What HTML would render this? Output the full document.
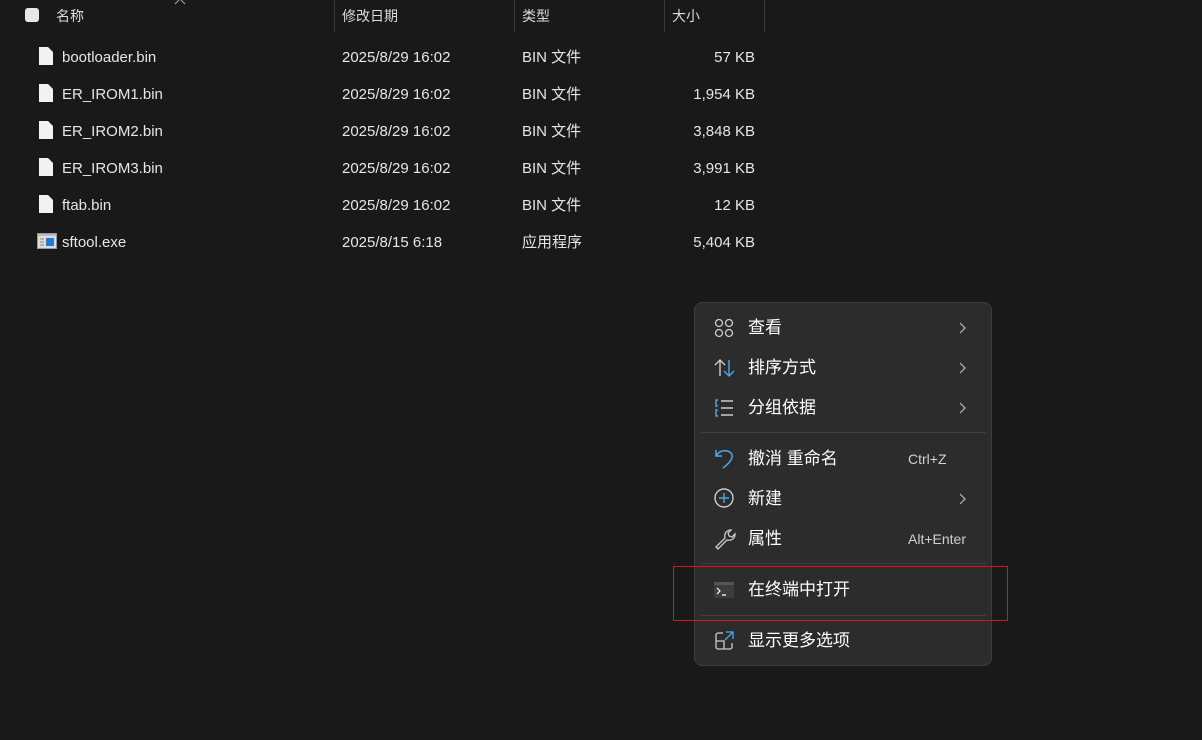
<!DOCTYPE html><html><head><meta charset="utf-8"><style>
body{margin:0;width:1202px;height:740px;background:#191919;font-family:"Liberation Sans","Noto Sans CJK SC",sans-serif;color:#fff;position:relative;overflow:hidden}
.a{position:absolute;white-space:nowrap}
.h{font-size:14px;color:#dcdcdc;top:6px;line-height:20px}
.d{position:absolute;top:0;width:1px;height:32px;background:#3a3a3a}
.r{font-size:15px;color:#e6e6e6;line-height:20px;top:2px}
.f{position:absolute;left:39px;top:1px;width:14px;height:18px}
.menu{position:absolute;left:694px;top:302px;width:296px;height:362px;background:#2c2c2c;border:1px solid #3c3c3c;border-radius:8px}
.m{position:absolute;left:53px;font-size:17px;color:#fff;line-height:24px;margin-top:1px}
.k{position:absolute;left:213px;font-size:14px;color:#d0d0d0;line-height:20px}
.c{position:absolute;left:264px}
.s{position:absolute;left:6px;width:285px;height:1px;background:#3f3f3f}
.i{position:absolute;left:19px}
</style></head><body>
<div class="a" style="left:25px;top:8px;width:14px;height:14px;border-radius:3px;background:#e8e8e8"></div>
<div class="a h" style="left:56px">名称</div>
<svg class="a" style="left:174px;top:-2px" width="12" height="8"><path d="M1 6L6 1L11 6" stroke="#aaa" fill="none"/></svg>
<div class="d" style="left:334px"></div><div class="a h" style="left:342px">修改日期</div>
<div class="d" style="left:514px"></div><div class="a h" style="left:522px">类型</div>
<div class="d" style="left:664px"></div><div class="a h" style="left:672px">大小</div>
<div class="d" style="left:764px"></div>

<div style="position:absolute;left:0;top:46px">
<div style="position:absolute;top:0"><svg class="f"><path d="M0 0H9L14 5V18H0Z" fill="#f2f2f2"/></svg><span class="a r" style="left:62px">bootloader.bin</span><span class="a r" style="left:342px">2025/8/29 16:02</span><span class="a r" style="left:522px">BIN 文件</span><span class="a r" style="left:655px;width:100px;text-align:right">57 KB</span></div>
<div style="position:absolute;top:37px"><svg class="f"><path d="M0 0H9L14 5V18H0Z" fill="#f2f2f2"/></svg><span class="a r" style="left:62px">ER_IROM1.bin</span><span class="a r" style="left:342px">2025/8/29 16:02</span><span class="a r" style="left:522px">BIN 文件</span><span class="a r" style="left:655px;width:100px;text-align:right">1,954 KB</span></div>
<div style="position:absolute;top:74px"><svg class="f"><path d="M0 0H9L14 5V18H0Z" fill="#f2f2f2"/></svg><span class="a r" style="left:62px">ER_IROM2.bin</span><span class="a r" style="left:342px">2025/8/29 16:02</span><span class="a r" style="left:522px">BIN 文件</span><span class="a r" style="left:655px;width:100px;text-align:right">3,848 KB</span></div>
<div style="position:absolute;top:111px"><svg class="f"><path d="M0 0H9L14 5V18H0Z" fill="#f2f2f2"/></svg><span class="a r" style="left:62px">ER_IROM3.bin</span><span class="a r" style="left:342px">2025/8/29 16:02</span><span class="a r" style="left:522px">BIN 文件</span><span class="a r" style="left:655px;width:100px;text-align:right">3,991 KB</span></div>
<div style="position:absolute;top:148px"><svg class="f"><path d="M0 0H9L14 5V18H0Z" fill="#f2f2f2"/></svg><span class="a r" style="left:62px">ftab.bin</span><span class="a r" style="left:342px">2025/8/29 16:02</span><span class="a r" style="left:522px">BIN 文件</span><span class="a r" style="left:655px;width:100px;text-align:right">12 KB</span></div>
<div style="position:absolute;top:185px"><svg class="a" style="left:37px;top:2px" width="20" height="16"><rect x="0.5" y="0.5" width="19" height="15" fill="#ddd" stroke="#999"/><rect x="1" y="1" width="18" height="2" fill="#bbb"/><rect x="9" y="5" width="8" height="8" fill="#1e7ad8"/><path d="M3 6h4M3 9h4M3 12h4" stroke="#888"/></svg><span class="a r" style="left:62px">sftool.exe</span><span class="a r" style="left:342px">2025/8/15 6:18</span><span class="a r" style="left:522px">应用程序</span><span class="a r" style="left:655px;width:100px;text-align:right">5,404 KB</span></div>
</div>

<div class="menu">
<svg class="i" style="top:15px" width="20" height="20" fill="none" stroke="#ccc" stroke-width="1.3"><circle cx="5" cy="5" r="3.5"/><circle cx="15" cy="5" r="3.5"/><circle cx="5" cy="15" r="3.5"/><circle cx="15" cy="15" r="3.5"/></svg>
<div class="m" style="top:12px">查看</div><svg class="c" style="top:19px" width="8" height="12"><path d="M1 1L6 6L1 11" stroke="#bbb" fill="none" stroke-width="1.2"/></svg>
<svg class="i" style="top:55px" width="22" height="20" fill="none" stroke-width="1.4"><path d="M6 18V2M1 7L6 2L11 7" stroke="#ccc"/><path d="M15 2V18M10 13L15 18L20 13" stroke="#4aa8e8"/></svg>
<div class="m" style="top:52px">排序方式</div><svg class="c" style="top:59px" width="8" height="12"><path d="M1 1L6 6L1 11" stroke="#bbb" fill="none" stroke-width="1.2"/></svg>
<svg class="i" style="top:95px" width="20" height="20" fill="none" stroke-width="1.4"><path d="M7 3h12M7 10h12M7 17h12" stroke="#ccc"/><path d="M4 2H2V8H4M4 12H2V18H4" stroke="#4aa8e8"/></svg>
<div class="m" style="top:92px">分组依据</div><svg class="c" style="top:99px" width="8" height="12"><path d="M1 1L6 6L1 11" stroke="#bbb" fill="none" stroke-width="1.2"/></svg>
<div class="s" style="top:129px"></div>
<svg class="i" style="top:145px" width="22" height="22" fill="none" stroke="#4aa8e8" stroke-width="1.5"><path d="M2 2V8H8M2 8C5 3 11 1 16 4C21 8 17 14 9 20"/></svg>
<div class="m" style="top:143px">撤消 重命名</div><div class="k" style="top:146px">Ctrl+Z</div>
<svg class="i" style="top:185px" width="22" height="22" fill="none" stroke-width="1.4"><circle cx="10" cy="10" r="9" stroke="#ccc"/><path d="M10 5V15M5 10H15" stroke="#4aa8e8"/></svg>
<div class="m" style="top:183px">新建</div><svg class="c" style="top:190px" width="8" height="12"><path d="M1 1L6 6L1 11" stroke="#bbb" fill="none" stroke-width="1.2"/></svg>
<svg class="i" style="top:225px" width="22" height="22" fill="none" stroke="#ccc" stroke-width="1.3"><path d="M2 19L11 10C10 6 12 2 17 2L14 5L15 8L18 9L21 6C21 11 17 13 13 12L4 21Z"/></svg>
<div class="m" style="top:223px">属性</div><div class="k" style="top:226px">Alt+Enter</div>
<div class="s" style="top:260px"></div>
<svg class="i" style="top:279px" width="20" height="16"><rect width="20" height="16" fill="#3d3d3d"/><rect width="20" height="3" fill="#555"/><path d="M3 6L6 9L3 12M8 13H12" stroke="#fff" stroke-width="1.2" fill="none"/></svg>
<div class="m" style="top:274px">在终端中打开</div>
<div class="s" style="top:312px"></div>
<svg class="i" style="top:327px" width="22" height="22" fill="none" stroke-width="1.3"><path d="M9 3H4C3 3 2 4 2 5V17C2 18 3 19 4 19H16C17 19 18 18 18 17V13M2 11H10V19" stroke="#ccc"/><path d="M12 2H19V9M19 2L11 10" stroke="#4aa8e8"/></svg>
<div class="m" style="top:325px">显示更多选项</div>
</div>
<div class="a" style="left:673px;top:566px;width:333px;height:53px;border:1px solid #d01818"></div>
</body></html>
